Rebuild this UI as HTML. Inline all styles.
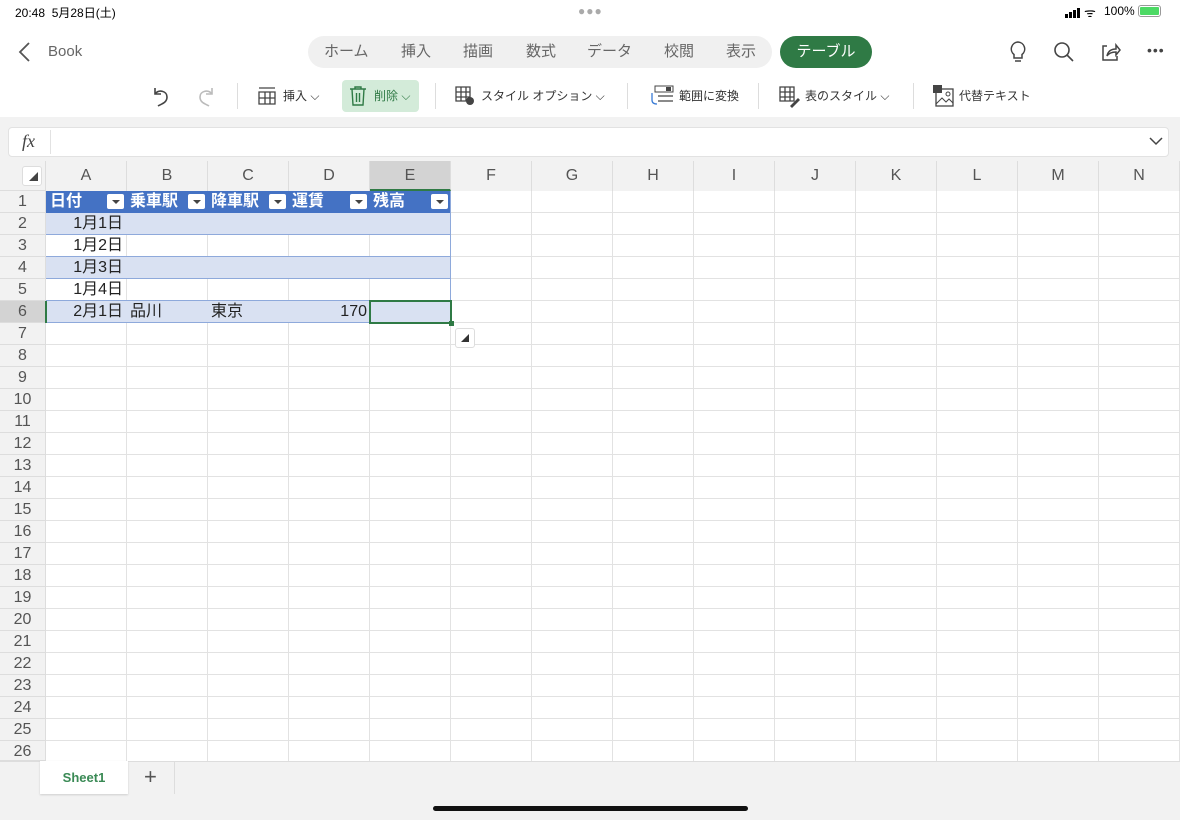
<!DOCTYPE html>
<html><head><meta charset="utf-8"><style>
*{margin:0;padding:0;box-sizing:border-box}
body{width:1180px;height:820px;position:relative;overflow:hidden;background:#fff;font-family:"Liberation Sans","Noto Sans CJK JP",sans-serif;color:#333}
.a{position:absolute}
.tab{position:absolute;top:36px;height:32px;line-height:32px;font-size:15px;color:#666}
.rb{position:absolute;top:86px;height:20px;line-height:20px;font-size:12px;color:#333;white-space:nowrap}
.sep{position:absolute;top:83px;width:1px;height:26px;background:#ddd}
.ch{position:absolute;top:161px;height:30px;line-height:30px;text-align:center;font-size:16px;color:#555;border-right:1px solid #ddd;background:#f2f2f2}
.rh{position:absolute;left:0;width:45px;height:22px;line-height:22px;text-align:center;font-size:16px;color:#555;background:#f2f2f2;border-bottom:1px solid #ddd}
.c{position:absolute;height:22px;line-height:22px;font-size:16px;color:#222}
.hd{position:absolute;top:191px;height:22px;line-height:22px;font-size:16px;font-weight:bold;color:#fff}
.dd{position:absolute;top:194px;width:17px;height:15px;background:#fff;border-radius:2px}
.dd:after{content:"";position:absolute;left:5px;top:6px;border-left:4px solid transparent;border-right:4px solid transparent;border-top:4px solid #444}
</style></head><body>
<div class="a" style="left:15px;top:4px;font-size:12px;color:#000">20:48&nbsp;&nbsp;5月28日(土)</div>
<div class="a" style="left:578px;top:4px;font-size:12px;color:#aaa;letter-spacing:1px">●●●</div>
<div class="a" style="left:1065px;top:5px;width:16px;height:10px"><svg width="16" height="10"><rect x="0" y="6" width="3" height="4" fill="#000"/><rect x="4" y="4" width="3" height="6" fill="#000"/><rect x="8" y="2" width="3" height="8" fill="#000"/><rect x="12" y="0" width="3" height="10" fill="#000"/></svg></div>
<div class="a" style="left:1084px;top:3px;font-size:13px;color:#000">ᯤ</div>
<div class="a" style="left:1104px;top:4px;font-size:12px;color:#000">100%</div>
<div class="a" style="left:1138px;top:5px;width:23px;height:12px;border:1px solid #999;border-radius:3px;padding:1px"><div style="width:100%;height:100%;background:#4cd964;border-radius:1px"></div></div>
<svg class="a" style="left:17px;top:41px" width="14" height="22"><path d="M12 2 L3 11 L12 20" stroke="#555" stroke-width="1.8" fill="none"/></svg>
<div class="a" style="left:48px;top:43px;font-size:15px;color:#666">Book</div>
<div class="a" style="left:308px;top:36px;width:464px;height:32px;border-radius:16px;background:#f0f0f0"></div>
<div class="tab" style="left:324px">ホーム</div>
<div class="tab" style="left:401px">挿入</div>
<div class="tab" style="left:463px">描画</div>
<div class="tab" style="left:526px">数式</div>
<div class="tab" style="left:587px">データ</div>
<div class="tab" style="left:664px">校閲</div>
<div class="tab" style="left:726px">表示</div>
<div class="a" style="left:780px;top:36px;width:92px;height:32px;border-radius:16px;background:#2f7a45;color:#fff;font-size:15px;line-height:32px;text-align:center">テーブル</div>
<svg class="a" style="left:1008px;top:40px" width="20" height="24"><path d="M10 2a7 7 0 0 0-4 12.5V18h8v-3.5A7 7 0 0 0 10 2z M7 21h6" stroke="#444" stroke-width="1.5" fill="none"/></svg>
<svg class="a" style="left:1053px;top:41px" width="22" height="22"><circle cx="9" cy="9" r="7" stroke="#444" stroke-width="1.6" fill="none"/><path d="M14 14l6 6" stroke="#444" stroke-width="1.6"/></svg>
<svg class="a" style="left:1099px;top:41px" width="22" height="22"><path d="M8 5H4v14h14v-4" stroke="#444" stroke-width="1.5" fill="none"/><path d="M8 15c1-5 4-7 9-7V4l4 5-4 5v-3c-4 0-7 1-9 4z" stroke="#444" stroke-width="1.5" fill="none"/></svg>
<div class="a" style="left:1147px;top:42px;font-size:14px;color:#444;letter-spacing:1px">•••</div>
<svg class="a" style="left:150px;top:85px" width="22" height="22"><path d="M5 3v6h6" stroke="#444" stroke-width="1.6" fill="none"/><path d="M5 9c4-5 12-3 12 3s-6 7-9 9" stroke="#444" stroke-width="1.6" fill="none"/></svg>
<svg class="a" style="left:195px;top:85px" width="22" height="22"><path d="M17 3v6h-6" stroke="#bbb" stroke-width="1.6" fill="none"/><path d="M17 9c-4-5-12-3-12 3s6 7 9 9" stroke="#bbb" stroke-width="1.6" fill="none"/></svg>
<div class="sep" style="left:237px"></div>
<svg class="a" style="left:258px;top:87px" width="18" height="18"><path d="M1 1h16M1 5h16v12H1zM1 11h16M7 5v12M12 5v12" stroke="#444" stroke-width="1.3" fill="none"/></svg>
<div class="rb" style="left:283px">挿入 ⌵</div>
<div class="a" style="left:342px;top:80px;width:77px;height:32px;border-radius:4px;background:#d3ebd9"></div>
<svg class="a" style="left:348px;top:85px" width="20" height="22"><path d="M2 4h16M7 4V2h6v2M4 4l1 16h10l1-16M8.5 8v9M11.5 8v9" stroke="#2f7a45" stroke-width="1.4" fill="none"/></svg>
<div class="rb" style="left:374px;color:#2f7a45">削除 ⌵</div>
<div class="sep" style="left:435px"></div>
<svg class="a" style="left:455px;top:86px" width="22" height="22"><path d="M1 1h14v14H1zM1 6h14M1 11h14M6 1v14M11 1v14" stroke="#444" stroke-width="1.3" fill="none"/><circle cx="15" cy="15" r="4" fill="#444"/></svg>
<div class="rb" style="left:481px">スタイル オプション ⌵</div>
<div class="sep" style="left:627px"></div>
<svg class="a" style="left:649px;top:85px" width="26" height="22"><rect x="6" y="1" width="18" height="6" stroke="#444" fill="none"/><rect x="17" y="2" width="5" height="4" fill="#444"/><path d="M9 11h15M9 16h15" stroke="#444" stroke-width="1.3"/><path d="M3 8v7c0 3 2 4 5 4" stroke="#3a7bd5" stroke-width="1.3" fill="none"/></svg>
<div class="rb" style="left:679px">範囲に変換</div>
<div class="sep" style="left:758px"></div>
<svg class="a" style="left:779px;top:86px" width="22" height="22"><path d="M1 1h14v14H1zM1 6h14M1 11h14M6 1v14M11 1v14" stroke="#444" stroke-width="1.3" fill="none"/><path d="M11 20l8-8 2 2-8 8z" fill="#444"/></svg>
<div class="rb" style="left:805px">表のスタイル ⌵</div>
<div class="sep" style="left:913px"></div>
<svg class="a" style="left:932px;top:84px" width="22" height="24"><rect x="1" y="1" width="9" height="8" fill="#444"/><rect x="4" y="5" width="17" height="17" stroke="#444" fill="none" stroke-width="1.3"/><path d="M4 20l6-6 4 4 3-3 4 4" stroke="#444" fill="none"/><circle cx="16" cy="10" r="2" stroke="#444" fill="none"/></svg>
<div class="rb" style="left:959px">代替テキスト</div>
<div class="a" style="left:0;top:117px;width:1180px;height:44px;background:#f2f2f2"></div>
<div class="a" style="left:8px;top:127px;width:1161px;height:30px;background:#fff;border:1px solid #e2e2e2;border-radius:4px"></div>
<div class="a" style="left:22px;top:131px;font-family:'Liberation Serif',serif;font-style:italic;font-size:18px;color:#444">fx</div>
<div class="a" style="left:50px;top:130px;width:1px;height:24px;background:#e2e2e2"></div>
<svg class="a" style="left:1149px;top:136px" width="14" height="10"><path d="M1 2l6 6 6-6" stroke="#444" stroke-width="1.5" fill="none"/></svg>
<div class="a" style="left:46px;top:191px;width:1134px;height:570px;background-image:linear-gradient(to right,transparent 80px,#e2e2e2 80px),linear-gradient(to bottom,transparent 21px,#e2e2e2 21px);background-size:81px 100%,100% 22px"></div>
<div class="a" style="left:0;top:161px;width:1180px;height:30px;background:#f2f2f2;border-bottom:1px solid #ddd"></div>
<div class="a" style="left:22px;top:166px;width:20px;height:20px;background:#fff;border:1px solid #ddd;border-radius:3px"></div>
<div class="a" style="left:29px;top:172px;border-left:9px solid transparent;border-bottom:9px solid #444"></div>
<div class="ch" style="left:46px;width:81px">A</div>
<div class="ch" style="left:127px;width:81px">B</div>
<div class="ch" style="left:208px;width:81px">C</div>
<div class="ch" style="left:289px;width:81px">D</div>
<div class="ch" style="left:370px;width:81px;background:#d3d3d3;border-bottom:2px solid #2f7a45">E</div>
<div class="ch" style="left:451px;width:81px">F</div>
<div class="ch" style="left:532px;width:81px">G</div>
<div class="ch" style="left:613px;width:81px">H</div>
<div class="ch" style="left:694px;width:81px">I</div>
<div class="ch" style="left:775px;width:81px">J</div>
<div class="ch" style="left:856px;width:81px">K</div>
<div class="ch" style="left:937px;width:81px">L</div>
<div class="ch" style="left:1018px;width:81px">M</div>
<div class="ch" style="left:1099px;width:81px">N</div>
<div class="a" style="left:45px;top:161px;width:1px;height:600px;background:#ddd"></div>
<div class="rh" style="top:191px">1</div><div class="rh" style="top:213px">2</div><div class="rh" style="top:235px">3</div><div class="rh" style="top:257px">4</div><div class="rh" style="top:279px">5</div><div class="rh" style="top:301px;background:#d3d3d3">6</div><div class="rh" style="top:323px">7</div><div class="rh" style="top:345px">8</div><div class="rh" style="top:367px">9</div><div class="rh" style="top:389px">10</div><div class="rh" style="top:411px">11</div><div class="rh" style="top:433px">12</div><div class="rh" style="top:455px">13</div><div class="rh" style="top:477px">14</div><div class="rh" style="top:499px">15</div><div class="rh" style="top:521px">16</div><div class="rh" style="top:543px">17</div><div class="rh" style="top:565px">18</div><div class="rh" style="top:587px">19</div><div class="rh" style="top:609px">20</div><div class="rh" style="top:631px">21</div><div class="rh" style="top:653px">22</div><div class="rh" style="top:675px">23</div><div class="rh" style="top:697px">24</div><div class="rh" style="top:719px">25</div><div class="rh" style="top:741px;height:20px">26</div>
<div class="a" style="left:46px;top:191px;width:405px;height:22px;background:#4472c4"></div>
<div class="a" style="left:46px;top:213px;width:405px;height:22px;background:#d9e1f2;border-bottom:1px solid #8ea9db"></div>
<div class="a" style="left:46px;top:235px;width:405px;height:22px;border-bottom:1px solid #8ea9db;background-image:linear-gradient(to right,transparent 80px,#e2e2e2 80px);background-size:81px 100%"></div>
<div class="a" style="left:46px;top:257px;width:405px;height:22px;background:#d9e1f2;border-bottom:1px solid #8ea9db"></div>
<div class="a" style="left:46px;top:279px;width:405px;height:22px;border-bottom:1px solid #8ea9db;background-image:linear-gradient(to right,transparent 80px,#e2e2e2 80px);background-size:81px 100%"></div>
<div class="a" style="left:46px;top:301px;width:405px;height:22px;background:#d9e1f2;border-bottom:1px solid #8ea9db"></div>
<div class="a" style="left:450px;top:191px;width:1px;height:132px;background:#8ea9db"></div>
<div class="a" style="left:45px;top:301px;width:2px;height:22px;background:#2f7a45"></div>
<div class="hd" style="left:50px">日付</div><div class="dd" style="left:107px"></div>
<div class="hd" style="left:130px">乗車駅</div><div class="dd" style="left:188px"></div>
<div class="hd" style="left:211px">降車駅</div><div class="dd" style="left:269px"></div>
<div class="hd" style="left:292px">運賃</div><div class="dd" style="left:350px"></div>
<div class="hd" style="left:373px">残高</div><div class="dd" style="left:431px"></div>
<div class="c" style="left:46px;top:213px;width:77px;text-align:right">1月1日</div>
<div class="c" style="left:46px;top:235px;width:77px;text-align:right">1月2日</div>
<div class="c" style="left:46px;top:257px;width:77px;text-align:right">1月3日</div>
<div class="c" style="left:46px;top:279px;width:77px;text-align:right">1月4日</div>
<div class="c" style="left:46px;top:301px;width:77px;text-align:right">2月1日</div>
<div class="c" style="left:130px;top:301px">品川</div>
<div class="c" style="left:211px;top:301px">東京</div>
<div class="c" style="left:289px;top:301px;width:78px;text-align:right">170</div>
<div class="a" style="left:369px;top:300px;width:83px;height:24px;border:2px solid #2f7a45"></div>
<div class="a" style="left:449px;top:321px;width:5px;height:5px;background:#2f7a45"></div>
<div class="a" style="left:455px;top:328px;width:20px;height:20px;background:#fff;border:1px solid #ddd;border-radius:3px"></div>
<div class="a" style="left:461px;top:334px;border-left:8px solid transparent;border-bottom:8px solid #333"></div>
<div class="a" style="left:0;top:761px;width:1180px;height:59px;background:#f2f2f2;border-top:1px solid #ddd"></div>
<div class="a" style="left:40px;top:761px;width:88px;height:33px;background:#fff;box-shadow:0 1px 2px rgba(0,0,0,.15);font-size:13px;font-weight:bold;color:#3a8a55;text-align:center;line-height:33px">Sheet1</div>
<div class="a" style="left:144px;top:764px;font-size:22px;color:#555;font-weight:300">+</div>
<div class="a" style="left:174px;top:762px;width:1px;height:32px;background:#ddd"></div>
<div class="a" style="left:433px;top:806px;width:315px;height:5px;border-radius:3px;background:#111"></div>
</body></html>
